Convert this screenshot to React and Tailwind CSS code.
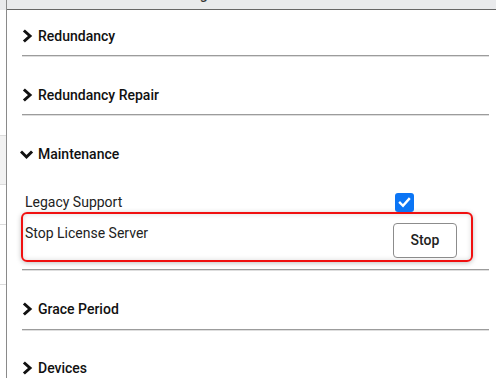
import React from "react";

function ChevRight() {
  return (
    <svg width="16" height="16" viewBox="0 0 16 16" className="shrink-0">
      <polyline points="5,3.5 10,8 5,12.5" fill="none" stroke="#111" strokeWidth="3" strokeLinecap="square" strokeLinejoin="miter" />
    </svg>
  );
}

function ChevDown() {
  return (
    <svg width="16" height="16" viewBox="0 0 16 16" className="shrink-0">
      <polyline points="2,6.5 6.5,11 11,6.5" fill="none" stroke="#111" strokeWidth="3" strokeLinecap="square" strokeLinejoin="miter" />
    </svg>
  );
}

function Header({ label, open }) {
  return (
    <div className="flex h-[24px] items-center -ml-[2px] gap-[2px]">
      {open ? <ChevDown /> : <ChevRight />}
      <span className="text-[14px] font-medium text-[#111] leading-none">{label}</span>
    </div>
  );
}

function Divider() {
  return <div className="h-px bg-[#9c9c9c] shadow-[0_1px_0_#dedede]" />;
}

export default function App() {
  return (
    <div className="w-[496px] h-[378px] overflow-hidden bg-white flex font-['Roboto',sans-serif]">
      {/* left cut-off strip */}
      <div className="w-[7px] shrink-0 border-r border-[#8a8a8a] flex flex-col">
        <div className="h-[10px] bg-[#e9eaec]" />
        <div className="h-[126px] border-b border-[#dcdcdc]" />
        <div className="h-[49px] bg-[#f2f2f2] border-b border-[#dcdcdc]" />
        <div className="h-[40px] border-b border-[#dcdcdc]" />
        <div className="h-[60px] border-b border-[#dcdcdc]" />
        <div className="flex-1" />
      </div>

      <div className="flex-1 flex flex-col">
        {/* top bar */}
        <div className="h-[10px] bg-[#e9eaec] border-b border-[#666] overflow-hidden shrink-0">
          <div className="pl-[156px] -mt-[16px] text-[14px] font-medium text-[#333] leading-[20px]">Settings</div>
        </div>

        <div className="pl-[15px] pr-[7px] flex flex-col">
          {/* Redundancy */}
          <div className="pt-[14px] pb-[7px]">
            <Header label="Redundancy" />
          </div>
          <Divider />

          {/* Redundancy Repair */}
          <div className="pt-[27px] pb-[7px]">
            <Header label="Redundancy Repair" />
          </div>
          <Divider />

          {/* Maintenance */}
          <div className="pt-[27px] pb-[7px]">
            <Header label="Maintenance" open />
            <div className="mt-[26px] flex h-[20px] items-center pl-[3px]">
              <span className="text-[14px] text-[#222]">Legacy Support</span>
              <div className="ml-auto mr-[75px] w-[19px] h-[19px] rounded-[3px] bg-[#0b75f5] flex items-center justify-center">
                <svg width="13" height="13" viewBox="0 0 13 13">
                  <polyline points="2,6.8 5,9.8 11,3" fill="none" stroke="#fff" strokeWidth="2.4" strokeLinecap="square" />
                </svg>
              </div>
            </div>
            <div className="-ml-px mr-[16px] h-[50px] border-2 border-[#f01010] rounded-[6px] flex items-start pt-[9px] pl-[2px] pr-[14px] shadow-[0_1px_5px_rgba(0,0,0,0.25),inset_0_0_5px_rgba(0,0,0,0.15)]">
              <span className="text-[14px] text-[#222] leading-[20px]">Stop License Server</span>
              <button className="ml-auto w-[64px] h-[35px] rounded-[4px] border border-[#8c8c8c] bg-white text-[14px] font-medium text-[#222]">
                Stop
              </button>
            </div>
          </div>
          <Divider />

          {/* Grace Period */}
          <div className="pt-[27px] pb-[8px]">
            <Header label="Grace Period" />
          </div>
          <Divider />

          {/* Devices */}
          <div className="pt-[26px] pb-[7px]">
            <Header label="Devices" />
          </div>
          <Divider />
        </div>
      </div>
    </div>
  );
}
